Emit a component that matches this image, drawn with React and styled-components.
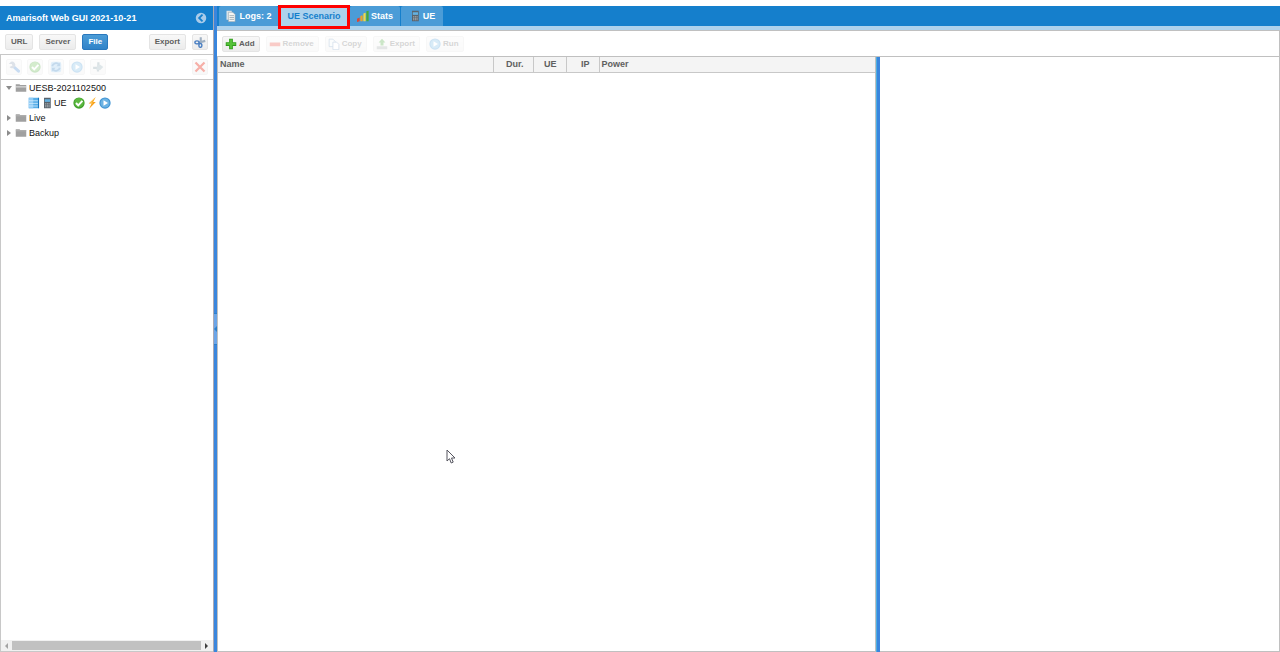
import React from 'react';
import styled, { createGlobalStyle, css } from 'styled-components';

const GlobalStyle = createGlobalStyle`
* { box-sizing: border-box; }
html, body, #root { height: 100%; }
body {
    margin: 0;
    background: #fff;
    color: #111;
    font-family: "Liberation Sans", Arial, sans-serif;
    font-size: 9px;
    line-height: 12px;
    overflow: hidden;
}
button { font-family: inherit; cursor: pointer; }
`

const Svg = ({ size = 12, children }) => (
    <svg width={size} height={size} viewBox="0 0 16 16" aria-hidden="true">{children}</svg>
)

const CollapseIcon = () => (
    <Svg>
        <circle cx="8" cy="8" r="7" fill="#a9cbe9" />
        <path d="M10 3.500 5.500 8l4.500 4.500" fill="none" stroke="#1580cd" strokeWidth="2.400" />
    </Svg>
)
const CutIcon = () => (
    <Svg>
        <path d="M9 1.500 9 9M15 6.500 6 9" stroke="#9fb0c2" strokeWidth="2.800" fill="none" />
        <ellipse cx="4" cy="8.500" rx="2.800" ry="2" fill="none" stroke="#4a7fc2" strokeWidth="1.900" />
        <ellipse cx="8.500" cy="12.500" rx="2" ry="2.600" fill="none" stroke="#4a7fc2" strokeWidth="1.900" />
    </Svg>
)
const WrenchIcon = () => (
    <Svg>
        <path d="m8 8 6 5.500" stroke="#2f7ad0" strokeWidth="4" strokeLinecap="round" />
        <path d="M1 4 4 1A4.500 4.500 0 0 1 9.500 7 4.500 4.500 0 0 1 2 8L6 6 5 4z" fill="#7f93ab" />
    </Svg>
)
const OkIcon = () => (
    <Svg>
        <circle cx="8" cy="8" r="7.500" fill="#3d9e29" />
        <circle cx="8" cy="7.500" r="6.200" fill="#5cb840" />
        <path d="m4 8 3 3.200 5.500-6" fill="none" stroke="#fff" strokeWidth="2.600" />
    </Svg>
)
const ReloadIcon = () => (
    <Svg>
        <rect x="1" y="1" width="14" height="14" rx="3" fill="#8dc4ec" />
        <path d="M3 7a5 5 0 0 1 9-2M13 9a5 5 0 0 1-9 2" fill="none" stroke="#1d70b8" strokeWidth="2.400" />
        <path d="M13.500 2v5h-5zM2.500 14V9h5z" fill="#1d70b8" />
    </Svg>
)
const PlayIcon = () => (
    <Svg>
        <circle cx="8" cy="8" r="7.500" fill="#3f93d3" />
        <circle cx="8" cy="8" r="6" fill="#6db3e3" />
        <path d="M6 4.200 12 8l-6 3.800z" fill="#fff" />
    </Svg>
)
const PlugIcon = () => (
    <Svg>
        <path d="M8.500 1.500V8M1.500 9H9M8 14V9" stroke="#6f8b95" strokeWidth="3" fill="none" />
        <path d="M7 5h4l4 3-4 4H6z" fill="#83a3ad" />
    </Svg>
)
const DeleteIcon = () => (
    <Svg>
        <path d="m2 2 12 12M14 2 2 14" stroke="#e8301d" strokeWidth="3" />
    </Svg>
)
const FolderIcon = ({ open }) => (
    <Svg>
        <path d="M1 3h5l1 1h8v9H1z" fill="#a0a0a0" />
        <path d={open ? 'M1 6.500h14' : 'M1 5h14'} stroke={open ? '#fff' : '#b8b8b8'} strokeWidth="1" />
    </Svg>
)
const ServerIcon = () => (
    <Svg>
        <path d="M1 1h13v14H1z" fill="#58aee8" />
        <path d="M1 1h6v14H1z" fill="#8fcbf5" />
        <path d="M1 5h13M1 8.500h13M1 12h13" stroke="#d8effd" strokeWidth="1" />
        <path d="M14 1v14" stroke="#1b78bd" strokeWidth="1.500" />
    </Svg>
)
const PhoneIcon = () => (
    <Svg>
        <path d="M4 1h9v14H4z" fill="#59636c" />
        <path d="M5 3h7v3.500H5z" fill="#63b0e0" />
        <path d="M5.500 9h6M5.500 11h6M5.500 13h6" stroke="#c6ccd0" strokeDasharray="1.500 .75" />
    </Svg>
)
const BoltIcon = () => (
    <Svg>
        <path d="M13 0 3.500 8.500h4L4 16l9-9.500H9.500z" fill="#f9a11b" />
        <path d="M11 2 6 8h3" fill="none" stroke="#ffd56a" />
    </Svg>
)
const LogIcon = () => (
    <Svg>
        <path d="M2 1h7v12H2z" fill="#dfe6ea" />
        <path d="M4.500 3h6l3 3v9.500h-9z" fill="#f5f5f2" stroke="#8298a5" strokeWidth=".7" />
        <path d="M6 7.500h6M6 10h6M6 12.500h6" stroke="#8da0aa" />
    </Svg>
)
const StatsIcon = () => (
    <Svg>
        <path d="M0 11.500 3.500 10v5L0 16z" fill="#e5432d" />
        <path d="M4.500 8 7.500 7v8h-3z" fill="#f0a325" />
        <path d="M8.500 4.500 11.500 3.500V15h-3z" fill="#f3da45" />
        <path d="M12.500 1.500 15.500 1v14h-3z" fill="#48a936" />
    </Svg>
)
const AddIcon = () => (
    <Svg>
        <path d="M5.500 1h5v4.500H15v5h-4.500V15h-5v-4.500H1v-5h4.500z" fill="#31981e" />
        <path d="M6.300 2h3.400v4.300H14v3H9.700V14H6.300V9.300H2v-3h4.300z" fill="#55c238" />
    </Svg>
)
const RemoveIcon = () => (
    <Svg><path d="M1 6h14v5H1z" fill="#ea3a2a" /></Svg>
)
const CopyIcon = () => (
    <Svg>
        <path d="M1.500 1.500h5l3 3v7h-8z" fill="#f3f8fb" stroke="#5584b4" />
        <path d="M6.500 5.500h5l3 3v7h-8z" fill="#fff" stroke="#5584b4" />
    </Svg>
)
const ExportIcon = () => (
    <Svg>
        <path d="M8 1l4.500 5H10v4H6V6H3.500z" fill="#3aa32b" />
        <path d="M1 11h14v4H1z" fill="#98a3a3" />
    </Svg>
)

const Page = styled.div`
display: flex;
height: 100%;
padding-top: 6px;
`

const Sidebar = styled.aside`
display: flex;
flex-direction: column;
flex: 0 0 213px;
`

const SidebarHeader = styled.header`
display: flex;
align-items: center;
justify-content: space-between;
height: 24px;
padding: 0 6px;
background: #157fcc;
color: #fff;
font-weight: bold;
h1 {
    margin: 0;
    font-size: 9px;
}
`

const PlainButton = styled.button`
display: flex;
padding: 0;
border: 0;
background: none;
`

const Toolbar = styled.div`
display: flex;
align-items: center;
flex: none;
gap: ${(props) => props.$gap || 6}px;
height: ${(props) => props.$height || 24}px;
padding: 0 5px;
background: #fff;
`

const IconToolbar = styled(Toolbar)`
border: 1px solid #c8c8c8;
border-right: 0;
`

const Spacer = styled.span`
flex: 1;
`

const ToolButton = styled.button`
display: flex;
align-items: center;
justify-content: center;
gap: 2px;
height: 16px;
padding: ${(props) => (props.$icon ? '0 4px 0 2px' : '0 5px')};
border: 1px solid #e4e4e4;
border-radius: 2px;
background: linear-gradient(#f8f8f8, #ececec);
color: #606060;
font-size: 8px;
font-weight: bold;
line-height: 12px;
white-space: nowrap;
${(props) => props.$pressed && css`
    border-color: #2a78bd;
    background: linear-gradient(#4b9cd7, #3183c8);
    color: #fff;
`}
&:disabled {
    opacity: ${(props) => (props.$faint ? 0.26 : 0.38)};
    cursor: default;
}
`

const IconButton = styled(ToolButton)`
width: 16px;
padding: 0;
`

const Tree = styled.ul`
flex: 1;
margin: 0;
padding: 0;
border-left: 1px solid #c8c8c8;
list-style: none;
`

const TreeRow = styled.li`
display: flex;
align-items: center;
gap: ${(props) => (props.$leaf ? 1 : 2)}px;
height: 15px;
padding-left: ${(props) => (props.$leaf ? 27 : 4)}px;
`

const Arrow = styled.button`
width: 8px;
height: 12px;
display: flex;
align-items: center;
justify-content: center;
padding: 0;
border: 0;
background: none;
`

const TreeStatus = styled.span`
display: flex;
gap: 1px;
margin-left: 5px;
`

const ScrollBar = styled.div`
display: flex;
align-items: center;
height: 12px;
padding-right: 1px;
border: 1px solid #c8c8c8;
border-top: 0;
border-right: 0;
background: #f1f1f1;
`

const ScrollArrow = styled(PlainButton)`
justify-content: center;
width: 11px;
`

const ScrollThumb = styled.div`
flex: 1;
height: 9px;
background: #c1c1c1;
`

const Splitter = styled.div`
display: flex;
align-items: center;
flex: 0 0 4px;
background: #3a86dd;
border-left: 1px solid ${(props) => props.$edge};
`

const SplitterHandle = styled.button`
width: 100%;
height: 32px;
padding: 0;
border: 0;
border-top: 1px solid #2c80ca;
border-bottom: 1px solid #2c80ca;
background: #6ba5e8;
svg { display: block; }
`

const Main = styled.main`
display: flex;
flex-direction: column;
flex: 1;
min-width: 0;
`

const TabBar = styled.nav`
display: flex;
gap: 1px;
height: 24px;
padding-left: 2px;
background: #157fcc;
border-bottom: 4px solid #add2ed;
`

const Tab = styled.button`
position: relative;
z-index: ${(props) => (props.$active ? 1 : 0)};
display: flex;
align-items: center;
justify-content: center;
gap: 2px;
min-width: ${(props) => props.$width}px;
height: 20px;
padding: 0;
border: 0;
border-radius: 2px 2px 0 0;
background: ${(props) => (props.$active ? '#add2ed' : '#4b9cd7')};
color: ${(props) => (props.$active ? '#157fcc' : '#fff')};
font-size: 9px;
font-weight: bold;
white-space: nowrap;
`

const Highlight = styled.span`
position: absolute;
inset: -1px -1px -3px -1px;
border: 3px solid #f00;
`

const Content = styled.div`
display: flex;
flex: 1;
min-height: 0;
`

const GridPanel = styled.section`
flex: 1;
min-width: 0;
border: 1px solid #c0c0c0;
border-top: 0;
`

const DetailPanel = styled.section`
flex: 0 1 400px;
border-right: 1px solid #c0c0c0;
border-bottom: 1px solid #c0c0c0;
`

const GridTable = styled.table`
width: 100%;
table-layout: fixed;
border-collapse: collapse;
th {
    height: 15px;
    border-right: 1px solid #c8c8c8;
    border-bottom: 1px solid #c8c8c8;
    background: #f4f4f4;
    color: #606060;
    line-height: 12px;
}
th:last-child { border-right: 0; }
`

const HeadCell = styled.th`
width: ${(props) => (props.$width ? props.$width + 'px' : 'auto')};
padding: ${(props) => (props.$right ? '0 9px 0 0' : '0 2px')};
text-align: ${(props) => (props.$right ? 'right' : 'left')};
`

const MainToolbar = styled(Toolbar)`
border-top: 1px solid #c0c0c0;
border-right: 1px solid #c0c0c0;
border-bottom: 1px solid #c0c0c0;
`

const Pointer = styled.svg`
position: absolute;
left: 446px;
top: 449px;
pointer-events: none;
`

const tabs = [
    { label: 'Logs: 2', icon: <LogIcon />, width: 59 },
    { label: 'UE Scenario', width: 70, active: true },
    { label: 'Stats', icon: <StatsIcon />, width: 50 },
    { label: 'UE', icon: <PhoneIcon />, width: 42 },
]

const serverActions = [
    { name: 'Configure', icon: <WrenchIcon /> },
    { name: 'Enable', icon: <OkIcon /> },
    { name: 'Reload', icon: <ReloadIcon /> },
    { name: 'Start', icon: <PlayIcon /> },
    { name: 'Connect', icon: <PlugIcon /> },
]

const scenarioActions = [
    { label: 'Add', icon: <AddIcon />, enabled: true },
    { label: 'Remove', icon: <RemoveIcon /> },
    { label: 'Copy', icon: <CopyIcon /> },
    { label: 'Export', icon: <ExportIcon /> },
    { label: 'Run', icon: <PlayIcon /> },
]

const TreeArrow = ({ open, label }) => (
    <Arrow aria-label={label} aria-expanded={!!open}>
        <svg width="6" height="6" viewBox="0 0 6 6">
            <path d={open ? 'M0 1h6L3 5z' : 'M1 0v6l4-3z'} fill="#8c8c8c" />
        </svg>
    </Arrow>
)

const App = () => {

    return (
        <Page>
            <GlobalStyle />
            <Sidebar>
                <SidebarHeader>
                    <h1>Amarisoft Web GUI 2021-10-21</h1>
                    <PlainButton aria-label="Collapse"><CollapseIcon /></PlainButton>
                </SidebarHeader>
                <Toolbar>
                    <ToolButton>URL</ToolButton>
                    <ToolButton>Server</ToolButton>
                    <ToolButton $pressed>File</ToolButton>
                    <Spacer />
                    <ToolButton>Export</ToolButton>
                    <IconButton aria-label="Cut"><CutIcon /></IconButton>
                </Toolbar>
                <IconToolbar $height={26} $gap={5}>
                    {serverActions.map((action) => (
                        <IconButton key={action.name} $faint disabled aria-label={action.name}>
                            {action.icon}
                        </IconButton>
                    ))}
                    <Spacer />
                    <IconButton disabled aria-label="Delete"><DeleteIcon /></IconButton>
                </IconToolbar>
                <Tree>
                    <TreeRow>
                        <TreeArrow open label="UESB-2021102500" />
                        <FolderIcon open />
                        <span>UESB-2021102500</span>
                    </TreeRow>
                    <TreeRow $leaf>
                        <ServerIcon />
                        <PhoneIcon />
                        <span>UE</span>
                        <TreeStatus>
                            <OkIcon />
                            <BoltIcon />
                            <PlayIcon />
                        </TreeStatus>
                    </TreeRow>
                    <TreeRow>
                        <TreeArrow label="Live" />
                        <FolderIcon />
                        <span>Live</span>
                    </TreeRow>
                    <TreeRow>
                        <TreeArrow label="Backup" />
                        <FolderIcon />
                        <span>Backup</span>
                    </TreeRow>
                </Tree>
                <ScrollBar>
                    <ScrollArrow aria-label="Scroll left">
                        <svg width="4" height="6"><path d="M3 0v6L0 3z" fill="#a3a3a3" /></svg>
                    </ScrollArrow>
                    <ScrollThumb />
                    <ScrollArrow aria-label="Scroll right">
                        <svg width="4" height="6"><path d="M0 0v6l3-3z" fill="#404040" /></svg>
                    </ScrollArrow>
                </ScrollBar>
            </Sidebar>
            <Splitter $edge="#a9a9b5">
                <SplitterHandle aria-label="Collapse sidebar">
                    <svg width="3" height="6"><path d="M3 0v6L0 3z" fill="#2c80ca" /></svg>
                </SplitterHandle>
            </Splitter>
            <Main>
                <TabBar>
                    {tabs.map((tab) => (
                        <Tab key={tab.label} $width={tab.width} $active={tab.active}>
                            {tab.icon}
                            {tab.label}
                            {tab.active && <Highlight />}
                        </Tab>
                    ))}
                </TabBar>
                <MainToolbar $height={27}>
                    {scenarioActions.map((action) => (
                        <ToolButton key={action.label} $icon $faint disabled={!action.enabled}>
                            {action.icon}
                            {action.label}
                        </ToolButton>
                    ))}
                </MainToolbar>
                <Content>
                    <GridPanel>
                        <GridTable>
                            <thead>
                                <tr>
                                    <HeadCell $width={275}>Name</HeadCell>
                                    <HeadCell $width={40} $right>Dur.</HeadCell>
                                    <HeadCell $width={33} $right>UE</HeadCell>
                                    <HeadCell $width={33} $right>IP</HeadCell>
                                    <HeadCell>Power</HeadCell>
                                </tr>
                            </thead>
                        </GridTable>
                    </GridPanel>
                    <Splitter $edge="#4fb0e0" />
                    <DetailPanel />
                </Content>
            </Main>
            <Pointer width="10" height="15" viewBox="0 0 10 15">
                <path d="M1 1v11l2.500-2.300L5.200 14l2-.9L5.500 9H9z" fill="#fff" stroke="#55555f" />
            </Pointer>
        </Page>
    )
}

export default App;
